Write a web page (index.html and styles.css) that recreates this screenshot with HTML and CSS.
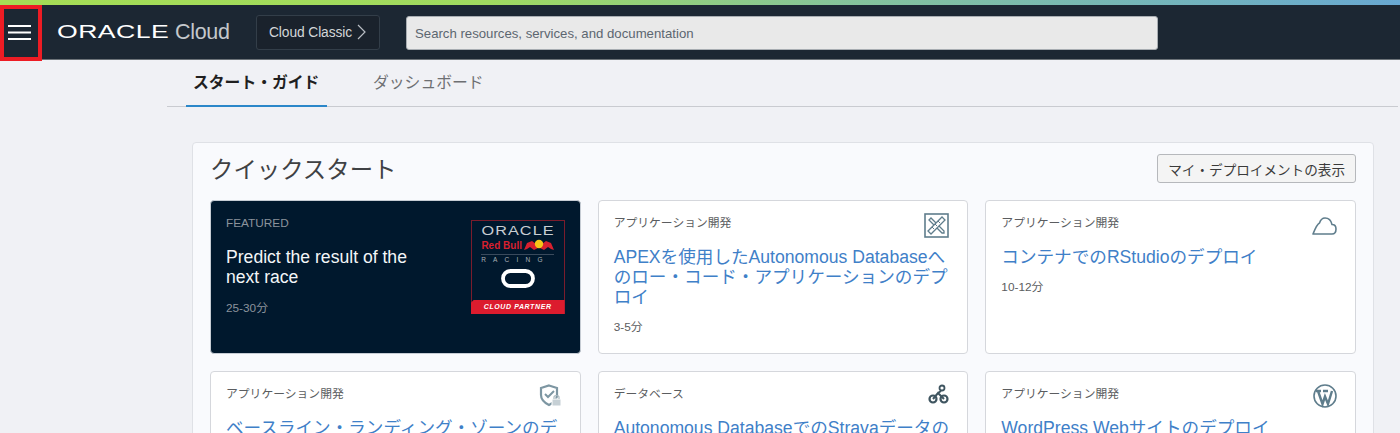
FILE: index.html
```html
<!DOCTYPE html>
<html lang="ja">
<head>
  <meta charset="UTF-8" />
  <meta name="viewport" content="width=device-width, initial-scale=1.0"/>
  <title>Oracle Cloud</title>
  <link rel="stylesheet" href="styles.css">
</head>
<body>
  <div class="accent-bar"></div>
  <header class="topbar">
    <button class="menu-btn" aria-label="menu">
      <svg width="23" height="15" viewBox="0 0 23 15"><path d="M0 1H23M0 7.5H23M0 14H23" stroke="#fff" stroke-width="2" fill="none"/></svg>
    </button>
    <div class="brand"><span class="brand-oracle">ORACLE</span><span class="brand-cloud">Cloud</span></div>
    <button class="classic-btn">Cloud Classic
      <svg width="9" height="16" viewBox="0 0 9 16"><path d="M1 1L8 8L1 15" stroke="#b9bec4" stroke-width="1.2" fill="none"/></svg>
    </button>
    <div class="search">Search resources, services, and documentation</div>
  </header>

  <main class="content">
    <nav class="tabs">
      <a class="tab active">スタート・ガイド</a>
      <a class="tab">ダッシュボード</a>
    </nav>

    <section class="panel">
      <div class="panel-head">
        <h2>クイックスタート</h2>
        <button class="deploy-btn">マイ・デプロイメントの表示</button>
      </div>

      <div class="cards">
        <article class="card featured">
          <div class="featured-text">
            <div class="card-label">FEATURED</div>
            <div class="card-title">Predict the result of the next race</div>
            <div class="card-time">25-30分</div>
          </div>
          <div class="badge">
            <span class="badge-oracle">ORACLE</span>
            <div class="badge-rb">
              <span>Red Bull</span>
              <svg width="30" height="12" viewBox="0 0 30 12"><path d="M0 11L3 4L8 2L12 5L14 9L10 11L6 8L3 10ZM30 11L27 4L22 2L18 5L16 9L20 11L24 8L27 10Z" fill="#d8202f"/><circle cx="15" cy="5" r="4.2" fill="#f5c518"/></svg>
            </div>
            <span class="badge-racing">RACING</span>
            <svg class="badge-ring" width="34" height="19" viewBox="0 0 34 19"><rect x="2" y="2" width="30" height="15" rx="7.5" fill="none" stroke="#fff" stroke-width="3.8"/></svg>
            <div class="badge-foot">CLOUD PARTNER</div>
          </div>
        </article>

        <article class="card">
          <div class="card-top">
            <div class="card-label">アプリケーション開発</div>
            <svg class="card-icon" width="25" height="25" viewBox="0 0 25 25">
              <rect x="1" y="1" width="23" height="23" fill="none" stroke="#5f7d8c" stroke-width="1.6"/>
              <path d="M5 7L7 5L20 18L20 20L18 20Z" fill="none" stroke="#5f7d8c" stroke-width="1.3"/>
              <path d="M4 18L18 4L21 7L7 21Z" fill="#fff" stroke="#5f7d8c" stroke-width="1.3"/>
              <path d="M8 14L10 16M11 11L13 13M14 8L16 10" stroke="#5f7d8c" stroke-width="1"/>
            </svg>
          </div>
          <a class="card-title">APEXを使用したAutonomous Databaseへのロー・コード・アプリケーションのデプロイ</a>
          <div class="card-time">3-5分</div>
        </article>

        <article class="card">
          <div class="card-top">
            <div class="card-label">アプリケーション開発</div>
            <svg class="card-icon cloud-icon" width="25" height="20" viewBox="0 0 25 20"><path d="M5 18H20C23 18 24 16 24 13C24 10 22 8.500 20 8.500C19 4 16 2 13 2C10 2 8.500 4 7.500 7C5 8 3 13 1 18H5Z" fill="none" stroke="#5f7d8c" stroke-width="1.6" stroke-linejoin="round"/></svg>
          </div>
          <a class="card-title">コンテナでのRStudioのデプロイ</a>
          <div class="card-time">10-12分</div>
        </article>

        <article class="card">
          <div class="card-top">
            <div class="card-label">アプリケーション開発</div>
            <svg class="card-icon" width="23" height="23" viewBox="0 0 23 23">
              <path d="M10 1.500L18 4V11C18 15.500 14 19 10 21C6 19 2 15.500 2 11V4Z" fill="none" stroke="#7d96a2" stroke-width="2.2"/>
              <path d="M6 10L9 13L15 7" fill="none" stroke="#7d96a2" stroke-width="2"/>
              <rect x="13" y="15" width="9" height="7" fill="#c6d0d5" stroke="#fff"/>
              <path d="M15 15V13C15 11 20 11 20 13V15" fill="none" stroke="#a9b8bf" stroke-width="1.2"/>
            </svg>
          </div>
          <a class="card-title">ベースライン・ランディング・ゾーンのデプロイ</a>
        </article>

        <article class="card">
          <div class="card-top">
            <div class="card-label">データベース</div>
            <svg class="card-icon" width="21" height="21" viewBox="0 0 21 21"><circle cx="5" cy="15" r="3.500" fill="none" stroke="#3f5560" stroke-width="2.2"/><circle cx="16" cy="15" r="3.500" fill="none" stroke="#3f5560" stroke-width="2.2"/><circle cx="14" cy="4" r="2.500" fill="none" stroke="#3f5560" stroke-width="1.8"/><path d="M5 15L10 9L13 12L16 15M10 9L13 7" fill="none" stroke="#3f5560" stroke-width="2"/></svg>
          </div>
          <a class="card-title">Autonomous DatabaseでのStravaデータの分析</a>
        </article>

        <article class="card">
          <div class="card-top">
            <div class="card-label">アプリケーション開発</div>
            <svg class="card-icon" width="24" height="24" viewBox="0 0 24 24"><circle cx="12" cy="12" r="11" fill="none" stroke="#5f7d8c" stroke-width="1.6"/><path d="M5 7L9.500 20L12 12.500L15 20L19 7M3 7H8M10 7H15" fill="none" stroke="#5f7d8c" stroke-width="2.4"/></svg>
          </div>
          <a class="card-title">WordPress Webサイトのデプロイ</a>
        </article>
      </div>
    </section>
  </main>
</body>
</html>
```

FILE: styles.css
```css
* {
  margin: 0;
  padding: 0;
  box-sizing: border-box;
}

html, body {
  height: 100%;
  overflow: hidden;
  background-color: #f0f1f5;
  font-family: "Liberation Sans", "Noto Sans CJK JP", sans-serif;
}

button {
  font-family: inherit;
  cursor: pointer;
}

.accent-bar {
  height: 5px;
  background: linear-gradient(90deg, #a5dd55 0%, #a0da60 35%, #86c49a 60%, #6fb0c4 90%, #68a8d2 100%);
}

.topbar {
  display: flex;
  align-items: center;
  height: 55px;
  background-color: #1c2733;
  border-bottom: 1px solid #6b7278;
}

.menu-btn {
  display: flex;
  align-items: center;
  flex: none;
  width: 42px;
  height: 56px;
  margin-bottom: -1px;
  padding-left: 4px;
  background: transparent;
  border: 4px solid #ed1c24;
}

.brand {
  display: flex;
  align-items: center;
  width: 214px;
  padding-left: 15px;
  color: #fff;
}

.brand-oracle {
  display: inline-block;
  width: 111px;
  font-size: 18.5px;
  line-height: 20px;
  letter-spacing: 0.3px;
  transform: scaleX(1.44);
  transform-origin: left center;
}

.brand-cloud {
  margin-left: 7px;
  font-size: 21.5px;
  color: #c4c8cc;
  letter-spacing: -0.3px;
}

.classic-btn {
  display: flex;
  align-items: center;
  gap: 5px;
  flex: none;
  width: 124px;
  height: 35px;
  padding-left: 12px;
  font-size: 13.8px;
  letter-spacing: -0.1px;
  white-space: nowrap;
  color: #d3d6d9;
  background-color: #1a222c;
  border: 1px solid #333e49;
  border-radius: 3px;
}

.search {
  width: 752px;
  height: 34px;
  margin-left: 26px;
  margin-top: 1px;
  padding-left: 8px;
  font-size: 13.2px;
  line-height: 33px;
  color: #5c6670;
  background-color: #e9e9e9;
  border: 1px solid #a8adb2;
  border-radius: 3px;
}

.content {
  margin-left: 167px;
  margin-right: 2px;
}

.tabs {
  display: flex;
  height: 47px;
  padding-left: 19px;
  gap: 39px;
  border-bottom: 1px solid #c9cbd0;
}

.tab {
  height: 47px;
  padding: 0 2px 0 7px;
  font-size: 15.8px;
  line-height: 46px;
  color: #6d6f72;
}

.tab.active {
  width: 141px;
  font-weight: bold;
  color: #1f1f1f;
  border-bottom: 2px solid #2b87c9;
}

.panel {
  margin: 35px 24px 0 25px;
  padding: 0 17px 18px 17px;
  background-color: #f9fafd;
  border: 1px solid #dfe1e6;
  border-radius: 4px;
}

.panel-head {
  display: flex;
  align-items: flex-start;
  justify-content: space-between;
  height: 57px;
  padding-top: 11px;
}

.panel-head h2 {
  margin-top: 1px;
  font-size: 23.4px;
  line-height: 30px;
  font-weight: normal;
  color: #3f4144;
}

.deploy-btn {
  height: 29px;
  padding: 0 10px;
  font-size: 13.6px;
  color: #3a3a3a;
  background-color: #f4f4f4;
  border: 1px solid #b6b8bc;
  border-radius: 3px;
}

.cards {
  display: grid;
  grid-template-columns: repeat(3, 1fr);
  grid-auto-rows: 154px;
  column-gap: 17px;
  row-gap: 17px;
}

.card {
  padding: 14px 15px;
  background-color: #fff;
  border: 1px solid #d5d7dc;
  border-radius: 4px;
}

.card-top {
  display: flex;
  justify-content: space-between;
  align-items: flex-start;
  height: 32px;
}

.card-label {
  font-size: 11.8px;
  line-height: 16px;
  color: #5b5d60;
}

.card-icon {
  flex: none;
  margin-top: -2px;
  margin-right: 3px;
}

.cloud-icon {
  margin-top: 1px;
}

.card-title {
  display: block;
  font-size: 17.6px;
  line-height: 20px;
  color: #3f80c8;
}

.card-time {
  margin-top: 12px;
  font-size: 11.8px;
  line-height: 16px;
  color: #5b5d60;
}

.card.featured {
  display: flex;
  justify-content: space-between;
  background-color: #00182d;
  border-color: #c6ccd4;
}

.featured-text {
  width: 195px;
}

.featured .card-label {
  height: 32px;
  color: #8b939c;
}

.featured .card-title {
  color: #f3f6f8;
}

.featured .card-time {
  margin-top: 13px;
  color: #8b939c;
}

.badge {
  display: flex;
  flex-direction: column;
  align-items: center;
  flex: none;
  width: 94px;
  height: 94px;
  margin-top: 5px;
  padding-top: 4px;
  border: 1px solid #7a1c2c;
  border-bottom: none;
}

.badge-oracle {
  font-size: 12px;
  line-height: 13px;
  letter-spacing: 0.8px;
  color: #c9ced3;
  transform: scaleX(1.35);
}

.badge-rb {
  display: flex;
  align-items: center;
  gap: 2px;
  height: 14px;
  font-size: 10px;
  font-weight: bold;
  color: #d8202f;
}

.badge-racing {
  width: 73px;
  margin-top: 2px;
  border-top: 1px solid #3a4a5c;
  font-size: 6.5px;
  line-height: 9px;
  letter-spacing: 7.2px;
  color: #a9b0b6;
  white-space: nowrap;
}

.badge-ring {
  margin-top: 5px;
}

.badge-foot {
  width: 94px;
  height: 14px;
  margin: auto -1px 0;
  font-size: 7px;
  font-weight: bold;
  font-style: italic;
  line-height: 14px;
  letter-spacing: 0.6px;
  text-align: center;
  color: #fff;
  background-color: #dc1c2e;
  clip-path: polygon(3px 0, 100% 0, 100% 100%, 0 100%, 0 3px);
}
```
